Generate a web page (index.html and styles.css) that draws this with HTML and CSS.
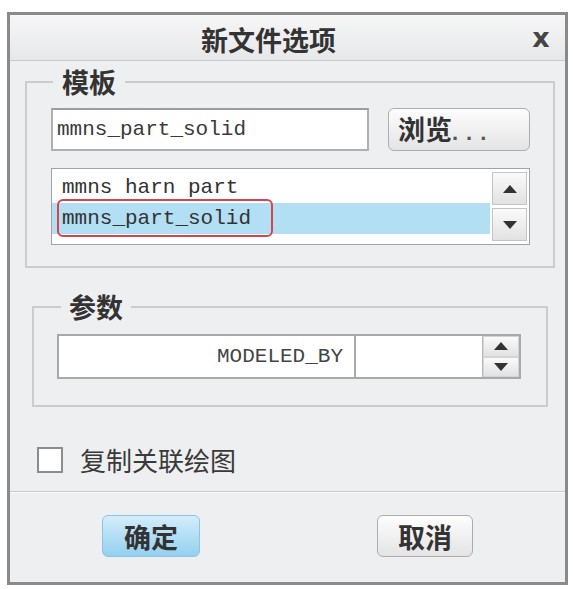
FILE: index.html
```html
<!DOCTYPE html>
<html lang="zh-CN">
<head>
  <meta charset="UTF-8" />
  <title>新文件选项</title>
  <link rel="stylesheet" href="styles.css">
</head>
<body>
  <div class="dialog">
    <div class="titlebar">
      <span class="title">新文件选项</span>
      <span class="close">x</span>
    </div>

    <!-- template -->
    <fieldset class="group group-template">
      <legend>模板</legend>
      <div class="file-row">
        <input class="text-input" type="text" value="mmns_part_solid" />
        <button class="btn browse">浏览<span class="dots">...</span></button>
      </div>
      <div class="listbox">
        <ul class="items">
          <li>mmns harn part</li>
          <li class="selected">mmns_part_solid</li>
        </ul>
        <div class="scrollbar">
          <span class="scroll-btn"><span class="arrow up"></span></span>
          <span class="scroll-btn"><span class="arrow down"></span></span>
        </div>
        <span class="mark"></span>
      </div>
    </fieldset>

    <!-- parameters -->
    <fieldset class="group group-params">
      <legend>参数</legend>
      <div class="param-row">
        <div class="param-name">MODELED_BY</div>
        <div class="param-value"></div>
        <div class="spinner">
          <span class="spin-btn"><span class="arrow up"></span></span>
          <span class="spin-btn"><span class="arrow down"></span></span>
        </div>
      </div>
    </fieldset>

    <label class="check-row">
      <input class="box" type="checkbox" />
      <span>复制关联绘图</span>
    </label>

    <div class="footer">
      <button class="btn btn-ok">确定</button>
      <button class="btn btn-cancel">取消</button>
    </div>
  </div>
</body>
</html>
```

FILE: styles.css
```css
body {
  margin: 0;
  background: #fff;
  font-family: "Noto Sans CJK SC", sans-serif;
  color: #333;
}

.dialog {
  box-sizing: border-box;
  width: 561px;
  height: 573px;
  margin: 12px 0 0 7px;
  border: 3px solid #8a8a8a;
  background: #eeeff0;
  display: flex;
  flex-direction: column;
}

.titlebar {
  height: 45px;
  border-bottom: 1px solid #c9cacb;
  background: linear-gradient(#f6f6f7, #e7e8e9);
  display: flex;
  align-items: center;
}
.title {
  flex: 1;
  text-align: center;
  font-size: 27px;
  font-weight: bold;
  line-height: 30px;
  padding-top: 4px;
}
.close {
  width: 28px;
  margin-right: 10px;
  text-align: center;
  font-family: "DejaVu Sans", sans-serif;
  font-weight: bold;
  font-size: 27px;
  line-height: 30px;
  color: #454545;
}

.group {
  margin: 0;
  padding: 11px 23px 21px 24px;
  border: 2px solid #cbcccd;
}
.group legend {
  margin-left: 2px;
  padding: 0 9px;
  font-size: 27px;
  font-weight: bold;
  line-height: 30px;
}
.group-template { margin: 6px 10px 0 15px; }
.group-params { margin: 24px 17px 0 22px; padding: 12px 25px 26px 23px; }
.group-params legend { margin-left: 4px; padding: 0 8px; }

.file-row {
  display: flex;
  gap: 19px;
  margin-bottom: 17px;
}
.text-input {
  box-sizing: border-box;
  width: 318px;
  height: 43px;
  margin: 0;
  padding: 0 0 0 4px;
  border: 2px solid #b0b0b0;
  border-top-color: #9c9c9c;
  background: #fff;
  font-family: "Liberation Mono", monospace;
  font-size: 21px;
  color: #3a3a3a;
  outline: none;
}

.btn {
  box-sizing: border-box;
  height: 42px;
  margin: 0;
  border: 1px solid #adadad;
  border-radius: 6px;
  background: linear-gradient(#fdfdfd, #e4e4e4);
  font-family: "Noto Sans CJK SC", sans-serif;
  font-size: 27px;
  font-weight: bold;
  color: #333;
  line-height: 1;
  padding: 0;
}
.browse {
  width: 142px;
  height: 43px;
  text-align: left;
  padding-left: 9px;
}
.dots {
  font-family: "Liberation Sans", sans-serif;
  font-size: 22px;
  letter-spacing: 8px;
  color: #555;
}

.listbox {
  position: relative;
  box-sizing: border-box;
  height: 77px;
  display: flex;
  border: 1px solid #a3a3a3;
  background: #fff;
}
.items {
  flex: 1;
  margin: 0;
  padding: 3px 0 0;
  list-style: none;
  overflow: hidden;
}
.items li {
  height: 31px;
  line-height: 31px;
  padding-left: 10px;
  font-family: "Liberation Mono", monospace;
  font-size: 21px;
  color: #333;
  white-space: pre;
}
.items li.selected { background: #b2dff3; }

.scrollbar {
  box-sizing: border-box;
  width: 39px;
  padding: 3px 2px;
  display: flex;
  flex-direction: column;
  gap: 3px;
}
.scroll-btn, .spin-btn {
  flex: 1;
  display: flex;
  align-items: center;
  justify-content: center;
  border: 1px solid #c4c4c4;
  background: linear-gradient(#fafafa, #e2e2e2);
}
.arrow {
  width: 0;
  height: 0;
  border-left: 7px solid transparent;
  border-right: 7px solid transparent;
}
.arrow.up { border-bottom: 8px solid #333; }
.arrow.down { border-top: 8px solid #333; }

/* red highlight drawn over the selected row */
.mark {
  position: absolute;
  left: 5px;
  top: 30px;
  box-sizing: border-box;
  width: 216px;
  height: 38px;
  border: 2px solid #d9434c;
  border-radius: 6px;
}

.param-row {
  box-sizing: border-box;
  height: 45px;
  display: flex;
  border: 2px solid #a9a9a9;
  background: #fff;
}
.param-name {
  box-sizing: border-box;
  width: 295px;
  padding-right: 11px;
  text-align: right;
  font-family: "Liberation Mono", monospace;
  font-size: 21px;
  line-height: 41px;
  color: #444;
}
.param-value {
  box-sizing: border-box;
  width: 129px;
  border-left: 2px solid #a9a9a9;
  border-right: 1px solid #b8b8b8;
}
.spinner {
  flex: 1;
  display: flex;
  flex-direction: column;
  gap: 2px;
  padding: 1px;
  background: #d4d4d4;
}
.spin-btn { border: none; }

.check-row {
  display: flex;
  align-items: center;
  gap: 17px;
  margin: 40px 0 0 27px;
  font-size: 26px;
  line-height: 26px;
  color: #3a3a3a;
}
.box {
  appearance: none;
  box-sizing: border-box;
  width: 26px;
  height: 26px;
  margin: 0;
  border: 2px solid #8c8c8c;
  background: #fff;
}

.footer {
  flex: 1;
  margin-top: 18px;
  border-top: 1px solid #c8c9ca;
  box-shadow: inset 0 1px 0 #fafafa;
  display: flex;
  justify-content: space-between;
  align-items: flex-start;
  padding: 23px 92px 0;
}
.btn-ok {
  width: 98px;
  border-color: #8ec3e3;
  background: linear-gradient(#d3edfb, #93d0f0);
}
.btn-cancel { width: 96px; }
```
